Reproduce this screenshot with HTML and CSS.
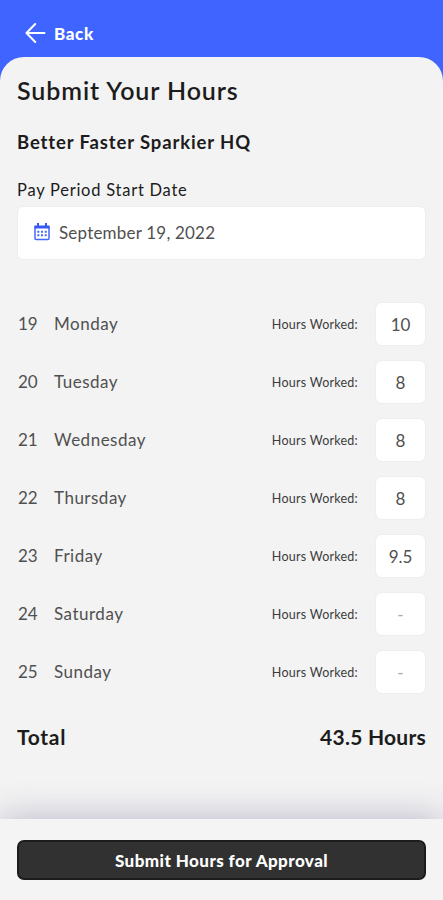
FILE: index.html
```html
<!DOCTYPE html>
<html lang="en">
  <head>
    <meta charset="utf-8">
    <title>Submit Your Hours</title>
    <link rel="stylesheet" href="styles.css">
  </head>
  <body>
    <header class="topbar">
      <a class="back" href="#">
        <svg width="21" height="20" viewBox="0 0 21 20">
          <path d="M19.500 10H2M10.200 1L1.500 10l8.700 9" />
        </svg>
        <span>Back</span>
      </a>
    </header>

    <main class="sheet">
      <h1>Submit Your Hours</h1>
      <h2>Better Faster Sparkier HQ</h2>

      <div class="label">Pay Period Start Date</div>
      <div class="date-field">
        <svg width="16" height="18" viewBox="0 0 16 18">
          <path class="frame" d="M1 4h14v11.500a1 1 0 0 1-1 1H2a1 1 0 0 1-1-1z" />
          <path class="band" d="M0.500 2.500h15V5.500H0.500zM3 0h2v3H3zM11 0h2v3h-2z" />
          <path class="dots" d="M3.300 8.800h10M3.300 12.300h10" />
        </svg>
        <span>September 19, 2022</span>
      </div>

      <div class="days">
        <div class="day"><span class="num">19</span><span class="name">Monday</span><span class="worked">Hours Worked:</span><span class="hours">10</span></div>
        <div class="day"><span class="num">20</span><span class="name">Tuesday</span><span class="worked">Hours Worked:</span><span class="hours">8</span></div>
        <div class="day"><span class="num">21</span><span class="name">Wednesday</span><span class="worked">Hours Worked:</span><span class="hours">8</span></div>
        <div class="day"><span class="num">22</span><span class="name">Thursday</span><span class="worked">Hours Worked:</span><span class="hours">8</span></div>
        <div class="day"><span class="num">23</span><span class="name">Friday</span><span class="worked">Hours Worked:</span><span class="hours">9.5</span></div>
        <div class="day"><span class="num">24</span><span class="name">Saturday</span><span class="worked">Hours Worked:</span><span class="hours empty">-</span></div>
        <div class="day"><span class="num">25</span><span class="name">Sunday</span><span class="worked">Hours Worked:</span><span class="hours empty">-</span></div>
      </div>

      <div class="total">
        <span class="total-label">Total</span>
        <span class="total-hours">43.5 Hours</span>
      </div>
    </main>

    <footer class="footer">
      <button class="submit" type="button">Submit Hours for Approval</button>
    </footer>
  </body>
</html>
```
FILE: styles.css
```css
* {
  box-sizing: border-box;
}
body {
  margin: 0;
  height: 900px;
  display: flex;
  flex-direction: column;
  overflow: hidden;
  background-color: #3f64ff;
  color: #1c1c1c;
  font-family: Lato, sans-serif;
}
.topbar {
  height: 57px;
  flex: none;
  padding: 23px 0 0 25px;
}
.back {
  display: flex;
  align-items: center;
  gap: 8px;
  height: 20px;
  color: #fff;
  font-size: 17px;
  font-weight: 900;
  letter-spacing: 0.6px;
  text-decoration: none;
}
.back path {
  fill: none;
  stroke: #fff;
  stroke-width: 2;
  stroke-linecap: round;
  stroke-linejoin: round;
}
.sheet {
  flex: 1;
  padding: 18px 17px 0;
  border-radius: 24px 24px 0 0;
  background-color: #f3f3f3;
}
h1 {
  margin: 0;
  font-size: 25px;
  line-height: 31px;
  font-weight: 600;
  letter-spacing: 0.9px;
}
h2 {
  margin: 24px 0 0;
  font-size: 18.500px;
  line-height: 24px;
  font-weight: 700;
  letter-spacing: 0.87px;
}
.label {
  margin-top: 25px;
  font-size: 16.500px;
  line-height: 22px;
  letter-spacing: 0.75px;
}
.date-field {
  display: flex;
  align-items: center;
  gap: 9px;
  height: 54px;
  margin-top: 5px;
  padding: 0 0 2px 16px;
  border: 1px solid #eee;
  border-radius: 6px;
  background-color: #fff;
  color: #505050;
  font-size: 17px;
  letter-spacing: 0.2px;
}
.date-field .frame {
  fill: none;
  stroke: #4466fa;
  stroke-width: 1.500;
}
.date-field .band {
  fill: #3558f2;
}
.date-field .dots {
  fill: none;
  stroke: #4466fa;
  stroke-width: 2;
  stroke-dasharray: 2 1.700;
}
.days {
  display: grid;
  gap: 14px;
  margin-top: 42px;
}
.day {
  display: flex;
  align-items: center;
  height: 44px;
  color: #505050;
  font-size: 17px;
}
.num {
  width: 36px;
  margin-left: 1px;
}
.name {
  flex: 1;
  letter-spacing: 0.5px;
}
.num,
.name {
  padding-bottom: 1px;
}
.worked {
  margin-right: 17px;
  padding-top: 1px;
  color: #3c3c3c;
  font-size: 12.500px;
  letter-spacing: 0.25px;
}
.hours {
  width: 51px;
  height: 44px;
  border: 1px solid #eee;
  border-radius: 7px;
  background-color: #fff;
  line-height: 43px;
  text-align: center;
}
.empty {
  color: #aaa;
}
.total {
  display: flex;
  justify-content: space-between;
  margin-top: 29px;
  font-size: 21px;
  line-height: 28px;
  font-weight: 700;
}
.total-label {
  letter-spacing: 0.7px;
}
.total-hours {
  letter-spacing: 0.25px;
}
.footer {
  height: 81px;
  flex: none;
  padding: 21px 17px 0;
  background-color: #f4f4f4;
  box-shadow: 0 0 36px rgba(60, 50, 110, 0.32);
}
.submit {
  display: block;
  width: 100%;
  height: 40px;
  border: 2px solid #1c1c1c;
  border-radius: 7px;
  background-color: #313131;
  color: #fff;
  font-family: inherit;
  font-size: 17px;
  font-weight: 900;
  letter-spacing: 0.43px;
}
```
